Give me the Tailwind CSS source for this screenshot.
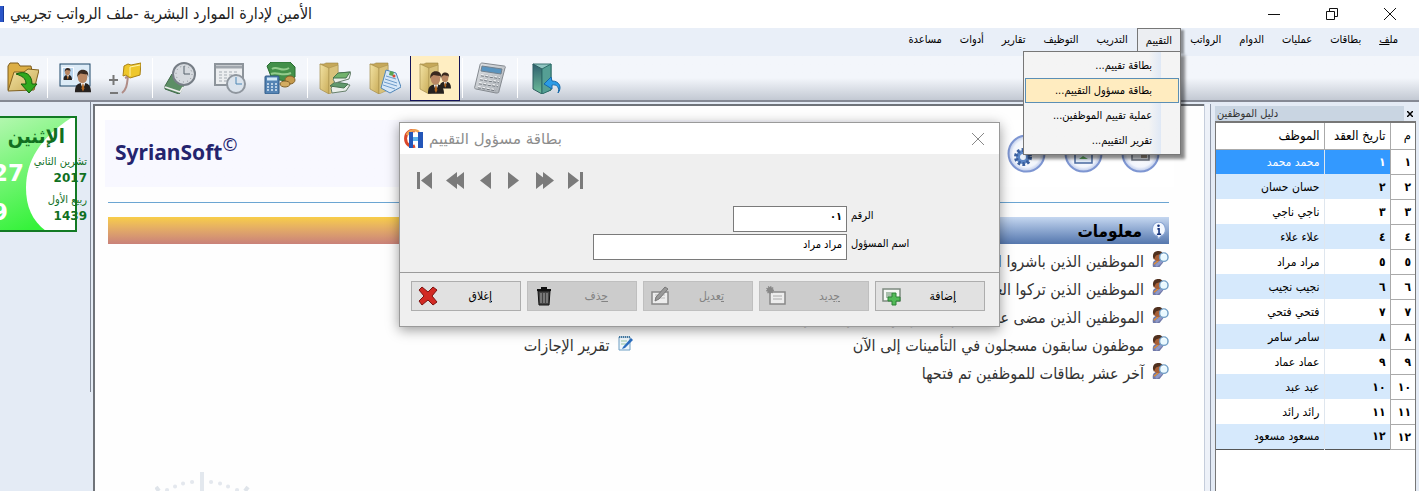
<!DOCTYPE html>
<html lang="ar">
  <head>
    <meta charset="UTF-8" />
    <meta name="viewport" content="width=device-width, initial-scale=1.0" />
    <title>الأمين لإدارة الموارد البشرية</title>
    <script src="https://cdn.jsdelivr.net/npm/@tailwindcss/browser@4"></script>
  </head>
  <body class="h-screen overflow-hidden flex flex-col bg-[#e4ebf5] font-['DejaVu_Sans_Condensed','DejaVu_Sans',sans-serif] text-black">
    <!-- shared icon shapes -->
    <svg class="absolute size-0">
      <defs>
        <linearGradient id="gold" x1="0" y1="0" x2="1" y2="1">
          <stop offset="0" stop-color="#f3e3a4" />
          <stop offset="1" stop-color="#c9ac58" />
        </linearGradient>
        <linearGradient id="silver" x1="0" y1="0" x2="1" y2="1">
          <stop offset="0" stop-color="#e2e5e8" />
          <stop offset="1" stop-color="#a9aeb4" />
        </linearGradient>
        <linearGradient id="teal" x1="0" y1="0" x2="0" y2="1">
          <stop offset="0" stop-color="#2f5f6e" />
          <stop offset="1" stop-color="#6fbf9b" />
        </linearGradient>
        <radialGradient id="orb">
          <stop offset="0" stop-color="#ffffff" />
          <stop offset="0.75" stop-color="#f2f5fc" />
          <stop offset="1" stop-color="#b9c8ea" />
        </radialGradient>
        <symbol id="folder" viewBox="0 0 32 32">
          <path d="M1 2h4l2-1h12v27l-3 1z" fill="#c5a85a" stroke="#9c8342" stroke-width=".6" />
          <path d="M1 2l9 4v26l-9-5z" fill="url(#gold)" stroke="#a58c4b" stroke-width=".7" />
          <path d="M10 6l9-3v25l-9 4z" fill="#d9c27b" stroke="#a58c4b" stroke-width=".5" />
        </symbol>
        <symbol id="person" viewBox="0 0 18 24">
          <path d="M1 24c0-7 2-9 6-10h5c4 1 6 4 6 10z" fill="#26211f" />
          <path d="M7 14l2.500 7L12 14z" fill="#f2f2f2" />
          <path d="M9 15l-1 5 1.500 3 1.500-3-1-5z" fill="#b3661f" />
          <ellipse cx="9" cy="8" rx="5" ry="6.500" fill="#b98763" />
          <path d="M3.500 8C3 2 6 0 9 0s7 1 6 8l-1-3c-3 0-5-1-7-1L4.500 6z" fill="#3a2a20" />
        </symbol>
        <symbol id="search-user" viewBox="0 0 18 18">
          <path d="M1 17c-1-5 1-7 4-8h4l3 3-4 5z" fill="#7079a8" />
          <path d="M5 15l6-5" stroke="#8f99c9" stroke-width="3" stroke-linecap="round" />
          <path d="M2 14l5-4" stroke="#e98f2c" stroke-width="1.200" />
          <circle cx="6" cy="6" r="4.500" fill="#a85f36" />
          <path d="M1 6C1 1 4 0 7 0s5 2 4 4C8 3 5 4 4 5L2 9z" fill="#50301e" />
          <circle cx="12.500" cy="6.500" r="4.500" fill="#eaf9ff" stroke="#6f9cc4" stroke-width="1.500" />
          <path d="M10 5c1-2 3-2 4-1" stroke="#fff" fill="none" />
        </symbol>
      </defs>
    </svg>

    <!-- title bar -->
    <header class="h-7 shrink-0 bg-white flex items-center justify-between">
      <div class="flex items-center gap-[6px]">
        <span class="w-1 h-4 bg-[#2a55c8] border-r border-[#173a9a]"></span>
        <h1 dir="rtl" class="text-[16px] leading-5 whitespace-nowrap text-[#222]">الأمين لإدارة الموارد البشرية -ملف الرواتب تجريبي</h1>
      </div>
      <div class="flex text-[#111]">
        <button class="w-[58px] h-7 flex items-center justify-center" aria-label="Minimize">
          <svg class="size-3" viewBox="0 0 12 12"><path d="M0 6.500h12" stroke="currentColor" /></svg>
        </button>
        <button class="w-[58px] h-7 flex items-center justify-center" aria-label="Restore">
          <svg class="size-3" viewBox="0 0 12 12" fill="none" stroke="currentColor"><path d="M.5 3.500h8v8h-8zM3.500 3.500v-3h8v8h-3" /></svg>
        </button>
        <button class="w-[58px] h-7 flex items-center justify-center" aria-label="Close">
          <svg class="size-3" viewBox="0 0 12 12"><path d="M0 0l12 12M12 0L0 12" stroke="currentColor" /></svg>
        </button>
      </div>
    </header>

    <!-- menu bar -->
    <nav dir="rtl" class="h-7 shrink-0 bg-[#e9eff8] px-3 text-[11px] leading-4 relative z-20">
      <ul class="flex">
        <li class="h-6 flex items-center px-[9px]"><a href="#">مل<u>ف</u></a></li>
        <li class="h-6 flex items-center px-[9px]"><a href="#">بطاقات</a></li>
        <li class="h-6 flex items-center px-[9px]"><a href="#">عمليات</a></li>
        <li class="h-6 flex items-center px-[9px]"><a href="#">الدوام</a></li>
        <li class="h-6 flex items-center px-[9px]"><a href="#">الرواتب</a></li>
        <li class="h-6 flex items-center px-2 relative border border-b-0 border-[#777] bg-[#eceef2] shadow-[3px_2px_2px_#0006]">
          <a href="#">التقييم</a>
          <ul class="absolute top-[22px] -right-px w-[158px] border border-[#777] bg-[#f4f4f4] bg-linear-to-l from-[#f4f4f4] from-12% via-[#dfe8f5] via-12% to-[#f4f4f4] to-20% p-px shadow-[4px_4px_3px_#0007]">
            <li class="h-[25px] flex items-center pr-[27px]"><a href="#">بطاقة تقييم...</a></li>
            <li class="h-[25px] flex items-center pr-[26px] border border-[#5b8fb5] bg-[#ffecc0]"><a href="#">بطاقة مسؤول التقييم...</a></li>
            <li class="h-[25px] flex items-center pr-[27px]"><a href="#">عملية تقييم الموظفين...</a></li>
            <li class="h-[25px] flex items-center pr-[27px]"><a href="#">تقرير التقييم...</a></li>
          </ul>
        </li>
        <li class="h-6 flex items-center px-[9px]"><a href="#">التدريب</a></li>
        <li class="h-6 flex items-center px-[9px]"><a href="#">التوظيف</a></li>
        <li class="h-6 flex items-center px-[9px]"><a href="#">تقارير</a></li>
        <li class="h-6 flex items-center px-[9px]"><a href="#">أدوات</a></li>
        <li class="h-6 flex items-center px-[9px]"><a href="#">مساعدة</a></li>
      </ul>
    </nav>

    <!-- toolbar -->
    <div class="h-[46px] shrink-0 flex items-center bg-linear-to-b from-[#f3f6fb] from-50% to-[#c3c9d3] border-b-2 border-[#858994]">
      <button class="w-[45px] h-11 flex items-center justify-center" aria-label="فتح ملف">
        <svg class="size-8" viewBox="0 0 32 32">
          <path d="M1 28V4l2-3h8l2 3h11l1 5v17z" fill="#dcae45" stroke="#7d5c1d" />
          <path d="M1 29l6-19h10l4-3 11 1-5 20z" fill="url(#gold)" stroke="#80601f" />
          <path d="M9 12c10-4 16 1 16 10h5l-8 9-8-9h5c0-6-4-8-10-10z" fill="#30a91e" stroke="#17600f" />
        </svg>
      </button>
      <span class="w-px h-10 mx-0.5 bg-[#fff]"></span>
      <button class="w-[50px] h-11 flex items-center justify-center" aria-label="بطاقة موظف">
        <svg class="size-8" viewBox="0 0 32 32">
          <rect x="1" y="2" width="30" height="22" fill="#dcebf7" stroke="#1d4668" />
          <rect x="3.500" y="5.500" width="11" height="12" fill="#b8d4ec" stroke="#f8fbff" />
          <use href="#person" x="4" y="6" width="9" height="12" />
          <use href="#person" x="15" y="7" width="17" height="24" />
        </svg>
      </button>
      <button class="w-[50px] h-11 flex items-center justify-center" aria-label="إضافة وحسم">
        <svg class="size-8" viewBox="0 0 32 32" fill="none">
          <path d="M0 18h9M4.500 13v10M1 31h8" stroke="#777" stroke-width="2" />
          <path d="M13 31c5-4 5-9 6-17M16 16l6-3" stroke="#b08c86" stroke-width="2" />
          <path d="M15 4l4-2 3 1 10-2-1 12-10 3-4-3-3 1z" fill="#eec72b" stroke="#a98216" />
          <path d="M21 5l10-2M21 5v9" stroke="#fff3ad" />
        </svg>
      </button>
      <span class="w-px h-10 mx-0.5 bg-[#fff]"></span>
      <button class="w-[50px] h-11 flex items-center justify-center" aria-label="الدوام">
        <svg class="size-8" viewBox="0 0 32 32">
          <path d="M8 12l13 8-4 9-2 3L1 27v-3z" fill="#5c8e65" stroke="#3e6847" />
          <path d="M1 25l15 5 3-5" fill="none" stroke="#eee" stroke-width="1.500" />
          <circle cx="20" cy="12" r="11" fill="#d6dadf" stroke="#777e86" stroke-width="2" />
          <circle cx="20" cy="12" r="8" fill="none" stroke="#8a9097" stroke-dasharray="1 3.200" />
          <path d="M20 4v8h6" fill="none" stroke="#55606b" />
        </svg>
      </button>
      <button class="w-[50px] h-11 flex items-center justify-center" aria-label="جدول الدوام">
        <svg class="size-8" viewBox="0 0 32 32">
          <rect x="1" y="2" width="28" height="21" fill="#eceef0" stroke="#8d949b" stroke-width="2" />
          <path d="M2 5h26" stroke="#a0a6ad" stroke-width="3" />
          <path d="M5 10h20M5 13h20M5 16h20M5 19h20" stroke="#a4abb2" stroke-dasharray="3 2" />
          <circle cx="22" cy="22" r="9" fill="#dbe3ec" stroke="#8f969e" stroke-width="2" />
          <path d="M22 15v7h6" fill="none" stroke="#4c87b5" />
        </svg>
      </button>
      <button class="w-[50px] h-11 flex items-center justify-center" aria-label="الرواتب">
        <svg class="size-8" viewBox="0 0 32 32">
          <path d="M3 4l4-4h19l5 5v10l-8 4L8 17z" fill="#43904a" stroke="#286c31" />
          <path d="M8 7c5-4 10 4 17-1M7 12c6-3 11 3 20-1" fill="none" stroke="#93cc8d" stroke-width="2" />
          <ellipse cx="26" cy="18" rx="5" ry="4" fill="#c59a4c" stroke="#82622a" />
          <ellipse cx="21" cy="22" rx="5" ry="3" fill="#d3ac62" stroke="#82622a" />
          <rect x="1" y="14" width="14" height="18" rx="1" fill="#5584b4" stroke="#2f5884" />
          <path d="M3 17h10" stroke="#d1e8f8" stroke-width="3" />
          <path d="M3 22h10M3 25h10M3 28h10" stroke="#ddeaf6" stroke-width="1.500" stroke-dasharray="2 2" />
        </svg>
      </button>
      <span class="w-px h-10 mx-0.5 bg-[#fff]"></span>
      <button class="w-[50px] h-11 flex items-center justify-center" aria-label="التدريب">
        <svg class="size-8" viewBox="0 0 32 32">
          <use href="#folder" width="32" height="32" />
          <path d="M12 26l5-5 14 2-4 6-14 2z" fill="#e9eee9" stroke="#67806c" />
          <path d="M11 24l5-4 13 2-4 4z" fill="#619a6d" stroke="#47744f" />
          <path d="M14 17l6-6 12-1-2 7-14 4z" fill="#e9eee9" stroke="#67806c" />
          <path d="M14 16l5-5 12-1-4 6z" fill="#72b36c" stroke="#47744f" />
        </svg>
      </button>
      <button class="w-[50px] h-11 flex items-center justify-center" aria-label="التوظيف">
        <svg class="size-8" viewBox="0 0 32 32">
          <use href="#folder" width="32" height="32" />
          <path d="M17 8l10 3 5 14-11 6-9-5z" fill="#d6e7f7" stroke="#4f86b8" />
          <path d="M17 14l10 3M16 17l12 4M15 20l13 4M14 23l12 4" stroke="#6d9ccb" />
          <path d="M21 9l4 1-1 4-4-1z" fill="#5aa352" /><circle cx="25" cy="14" r="1.500" fill="#d94e36" />
        </svg>
      </button>
      <button class="w-[50px] h-[46px] flex items-center justify-center border border-[#14145a] bg-[#ffeec2]" aria-label="بطاقة مسؤول التقييم">
        <svg class="size-8" viewBox="0 0 32 32">
          <use href="#folder" width="32" height="32" />
          <use href="#person" x="20" y="10" width="12" height="17" />
          <use href="#person" x="8" y="9" width="17" height="23" />
        </svg>
      </button>
      <span class="w-px h-10 mx-0.5 bg-[#fff]"></span>
      <button class="w-[50px] h-11 flex items-center justify-center" aria-label="حاسبة">
        <svg class="size-8" viewBox="0 0 32 32">
          <path d="M8 1l22 3c1 0 2 1 1 2l-6 23c0 2-1 2-3 2L2 27c-1 0-2-1-1-3L6 3c0-1 1-2 2-2z" fill="url(#silver)" stroke="#858a90" />
          <path d="M8 4l20 3-1 5-20-3z" fill="#5994c0" stroke="#71818f" />
          <path d="M7 13l19 3M6 17l19 3M5 21l19 3M4 25l18 3" stroke="#6f757c" stroke-width="2.500" stroke-dasharray="3 1.500" />
          <path d="M7 12.500l19 3M6 16.500l19 3M5 20.500l19 3M4 24.500l18 3" stroke="#eceef0" stroke-width="1.500" stroke-dasharray="3 1.500" />
        </svg>
      </button>
      <span class="w-px h-10 mx-0.5 bg-[#fff]"></span>
      <button class="w-[50px] h-11 flex items-center justify-center" aria-label="خروج">
        <svg class="size-8" viewBox="0 0 32 32">
          <path d="M4 2h18v26l-9 3z" fill="#8fc4c0" stroke="#3a7271" />
          <path d="M4 2l9 5v25l-9-5z" fill="url(#teal)" stroke="#2d5d60" />
          <path d="M13 7l9-5v26l-9 4z" fill="#559f94" stroke="#2d6c68" />
          <path d="M29 31c2-5-1-9-6-8v4l-8-5 7-7 1 4c8 0 10 7 6 12z" fill="#2b9be6" stroke="#1668a8" />
        </svg>
      </button>
    </div>

    <div class="flex-1 min-h-0 flex relative">
      <!-- date card -->
      <aside class="w-[91px] shrink-0 border-r border-[#7f8794] pt-[14px] h-[290px]">
        <div class="relative">
          <svg class="w-[77px] h-[116px]" viewBox="0 0 77 116">
            <defs>
              <linearGradient id="leaf" x1="0" y1="0" x2="0.300" y2="1">
                <stop offset="0" stop-color="#b4f7b0" />
                <stop offset="1" stop-color="#35f23a" />
              </linearGradient>
            </defs>
            <path d="M0 0h77v116H0z" fill="url(#leaf)" />
            <path d="M71 2C40 22 26 45 26 72c0 18 6 33 20 43h30V2z" fill="#fff" />
            <path d="M0 1h76v114H0" fill="none" stroke="#127a24" stroke-width="2" />
          </svg>
          <div class="absolute top-[38px] -left-2 flex flex-col text-white font-['DejaVu_Sans'] font-bold text-[23px] leading-[39px]">
            <span>27</span>
            <span>9</span>
          </div>
          <div dir="rtl" class="absolute top-1 right-[3px] flex flex-col text-[#11701f] text-[11px] leading-4 whitespace-nowrap">
            <span class="text-[20px] leading-8 font-bold pr-[22px]">الإثنين</span>
            <span class="mt-[2px]">تشرين الثاني</span>
            <span class="font-['DejaVu_Sans'] font-bold text-[12px]">2017</span>
            <span class="mt-[6px]">ربيع الأول</span>
            <span class="font-['DejaVu_Sans'] font-bold text-[12px]">1439</span>
          </div>
        </div>
      </aside>

      <!-- start page -->
      <main class="flex-1 min-w-0 mt-[2px] ml-[2px] relative bg-[#fefefe] border-t-2 border-l-2 border-[#6f7379] pt-[14px] pl-[10px] pr-[30px]">
        <div class="h-[67px] flex items-center justify-between bg-linear-to-r from-[#f8f8ff] from-50% to-white to-85% pl-[10px] pr-[14px]">
          <div class="font-['Noto_Sans'] font-bold text-[21px] leading-8 pb-1 text-[#24246e]">SyrianSoft<sup class="text-[18px] leading-none font-normal">©</sup></div>
          <div class="flex gap-[18px]">
            <svg class="size-[39px]" viewBox="0 0 39 39">
              <circle cx="19.500" cy="19.500" r="18" fill="url(#orb)" stroke="#7e96d2" stroke-width="2" />
              <circle cx="16" cy="23" r="7" fill="#5b86c6" stroke="#3a5f9e" stroke-width="4" stroke-dasharray="2.500 2" />
              <circle cx="16" cy="23" r="3" fill="#e9f1fb" />
            </svg>
            <svg class="size-[39px]" viewBox="0 0 39 39">
              <circle cx="19.500" cy="19.500" r="18" fill="url(#orb)" stroke="#7e96d2" stroke-width="2" />
              <rect x="11" y="13" width="17" height="16" fill="#e4eefb" stroke="#49699f" stroke-width="1.500" />
              <path d="M15 25l4-3 5 3" fill="#5aa05a" />
            </svg>
            <svg class="size-[39px]" viewBox="0 0 39 39">
              <circle cx="19.500" cy="19.500" r="18" fill="url(#orb)" stroke="#7e96d2" stroke-width="2" />
              <rect x="11" y="13" width="17" height="13" fill="#d9dde3" stroke="#6c7380" stroke-width="1.500" />
              <path d="M20 19h6v5h-6z" fill="#8d8377" />
            </svg>
          </div>
        </div>
        <div class="ml-[3px] mr-[5px]">
          <hr class="mt-[15px] border-[#6ba5d2]" />
          <div dir="rtl" class="mt-[14px] grid grid-cols-2 text-[16px] leading-7 whitespace-nowrap text-[#333]">
            <section>
              <h2 class="h-[27px] flex items-center gap-2 bg-linear-to-b from-[#c5d7f0] to-[#5577ae] pr-[2px] text-[17px] font-bold text-black">
                <svg class="size-[17px]" viewBox="0 0 16 16"><path d="M8 0a7 7 0 0 1 2 13.500L8 16l-1-2.500A7 7 0 0 1 8 0z" fill="#f3f8ff" stroke="#8aa6d4" /><path d="M7 6.500h1.500V11M6.500 11.500h4" stroke="#16337c" stroke-width="1.500" fill="none" /><circle cx="8" cy="3.500" r="1.200" fill="#16337c" /></svg>
                معلومات
              </h2>
              <ul class="pt-1">
                <li class="flex gap-2"><svg class="w-[17px] h-[17px] mt-[3px]"><use href="#search-user" /></svg><a href="#">الموظفين الذين باشروا العمل</a></li>
                <li class="flex gap-2"><svg class="w-[17px] h-[17px] mt-[3px]"><use href="#search-user" /></svg><a href="#">الموظفين الذين تركوا العمل</a></li>
                <li class="flex gap-2"><svg class="w-[17px] h-[17px] mt-[3px]"><use href="#search-user" /></svg><a href="#">الموظفين الذين مضى على تعيينهم أكثر من سنة ولم يثبتوا</a></li>
                <li class="flex gap-2"><svg class="w-[17px] h-[17px] mt-[3px]"><use href="#search-user" /></svg><a href="#">موظفون سابقون مسجلون في التأمينات إلى الآن</a></li>
                <li class="flex gap-2"><svg class="w-[17px] h-[17px] mt-[3px]"><use href="#search-user" /></svg><a href="#">آخر عشر بطاقات للموظفين تم فتحها</a></li>
              </ul>
            </section>
            <section>
              <h2 class="h-[27px] bg-linear-to-b from-[#f8cd47] to-[#c98179]"></h2>
              <ul class="pt-[88px] pr-[5px]">
                <li class="flex gap-2">
                  <svg class="w-4 h-[17px] mt-[3px]" viewBox="0 0 16 17"><path d="M1 2h11v13H1z" fill="#eef6fb" stroke="#6f9fc4" /><path d="M1 2h11" stroke="#467ca6" stroke-width="2" stroke-dasharray="1 1" /><path d="M3 6h6M3 9h5" stroke="#9cc9a4" /><path d="M5 12l8-9 2 2-8 8-3 1z" fill="#2c6fc0" /></svg>
                  <a href="#">تقرير الإجازات</a>
                </li>
              </ul>
            </section>
          </div>
        </div>
        <svg class="absolute left-[60px] bottom-0 w-[96px] h-5" viewBox="0 0 96 20">
          <path d="M47 1v19" stroke="#e3e8ee" stroke-width="4" />
          <path d="M1 16l3 4M93 16l-3 4" stroke="#dfe4ea" stroke-width="4" />
          <path d="M12 19h.1M20 15.500h.1M28 12.500h.1M37 11h.1M56 11h.1M65 12.500h.1M73 15.500h.1M82 19h.1" stroke="#e4e8ee" stroke-width="4" stroke-linecap="round" />
        </svg>
      </main>

      <!-- employee index -->
      <aside dir="rtl" class="w-[215px] shrink-0 mt-[2px] pr-[3px] flex">
        <div class="flex-1 flex flex-col pt-[2px]">
          <div class="h-[15px] flex items-center justify-between bg-[#c9d5e2] pl-[2px] text-[11px] leading-3 text-[#333]">
            <button class="w-3 h-full flex items-center justify-center bg-[#e4ebf5]" aria-label="إغلاق الدليل">
              <svg class="size-[6px]" viewBox="0 0 6 6"><path d="M0 0l6 6M6 0L0 6" stroke="#000" stroke-width="1.500" /></svg>
            </button>
            <span>دليل الموظفين</span>
          </div>
          <div class="flex-1 bg-white border-t-2 border-l border-r border-[#777]">
            <table class="w-full table-fixed border-b border-[#555] text-right text-[12px] leading-4">
              <thead>
                <tr class="h-[26px] text-[13px]">
                  <th class="w-[25px] border-l border-b border-[#aaa] font-normal pr-1">م</th>
                  <th class="w-[66px] border-l border-b border-[#aaa] font-normal pr-1 whitespace-nowrap">تاريخ العقد</th>
                  <th class="border-b border-[#aaa] font-normal pr-1">الموظف</th>
                </tr>
              </thead>
              <tbody id="employees"></tbody>
            </table>
          </div>
        </div>
        <div class="w-[5px] border-l border-[#8d96a6]"></div>
        <div class="w-[6px] border-l border-[#c5cddb] bg-[#edf1f8]"></div>
      </aside>

      <!-- evaluator card -->
      <div class="absolute left-[399px] top-5 w-[601px] border border-[#9a9a9a] bg-[#efefef] shadow-[0_3px_12px_#0006] z-10">
        <div class="h-[31px] bg-white flex items-center justify-between pl-1 pr-[15px]">
          <div class="flex items-center gap-[5px]">
            <svg class="size-5" viewBox="0 0 20 20">
              <path d="M11 2a7 8 0 1 0 0 15" fill="none" stroke="#d9472b" stroke-width="3" />
              <path d="M3 6c2-5 8-6 12-3" fill="none" stroke="#efa356" stroke-width="2.500" />
              <path d="M5 3h4v6h5V3h5v16h-5v-7H9v7H5z" fill="#2456b8" />
              <path d="M9 8h5v4H9z" fill="#60b4ea" />
            </svg>
            <h3 dir="rtl" class="font-['DejaVu_Sans'] text-[15px] leading-5 text-[#8d8d8d]">بطاقة مسؤول التقييم</h3>
          </div>
          <button aria-label="Close" class="text-[#888]"><svg class="size-3" viewBox="0 0 12 12"><path d="M0 0l12 12M12 0L0 12" stroke="currentColor" /></svg></button>
        </div>
        <div class="flex gap-3 pl-4 pt-[18px] text-[#7b7b7b]">
          <button aria-label="الأول"><svg class="w-[18px] h-[17px]" viewBox="0 0 18 17" fill="currentColor"><path d="M1 0h3v17H1zM16 0v17L5 8.500z" /></svg></button>
          <button aria-label="رجوع سريع"><svg class="w-[18px] h-[17px]" viewBox="0 0 18 17" fill="currentColor"><path d="M11 0v17L0 8.500zM18 0v17L7 8.500z" /></svg></button>
          <button aria-label="السابق"><svg class="w-[18px] h-[17px]" viewBox="0 0 18 17" fill="currentColor"><path d="M15 0v17L4 8.500z" /></svg></button>
          <button aria-label="التالي"><svg class="w-[18px] h-[17px]" viewBox="0 0 18 17" fill="currentColor"><path d="M2 0v17l11-8.500z" /></svg></button>
          <button aria-label="تقدم سريع"><svg class="w-[18px] h-[17px]" viewBox="0 0 18 17" fill="currentColor"><path d="M0 0v17l11-8.500zM7 0v17l11-8.500z" /></svg></button>
          <button aria-label="الأخير"><svg class="w-[18px] h-[17px]" viewBox="0 0 18 17" fill="currentColor"><path d="M2 0v17l11-8.500zM14 0h3v17h-3z" /></svg></button>
        </div>
        <div dir="rtl" class="grid grid-cols-[152px_1fr] gap-y-[2px] pt-[17px] text-[11px] leading-4">
          <label for="number" class="flex justify-end pl-1 h-[26px] pt-[2px] whitespace-nowrap">الرقم</label>
          <input id="number" value="٠١" class="w-[114px] h-[26px] bg-white border border-[#7a7a7a] px-1 pb-[6px] font-bold" />
          <label for="evaluator" class="flex justify-end pl-1 h-[26px] pt-[2px] whitespace-nowrap">اسم المسؤول</label>
          <input id="evaluator" value="مراد مراد" class="w-[254px] h-[26px] bg-white border border-[#7a7a7a] px-1 pb-[6px]" />
        </div>
        <div dir="rtl" class="mt-3 border-t border-[#9b9b9b] flex gap-[6px] pt-2 pb-[15px] pr-[14px] text-[12px] leading-4">
          <button class="w-[110px] h-[30px] flex items-center justify-between border border-[#adadad] bg-[#e1e1e1] pr-7 pl-[6px]">
            <span><u>إ</u>ضافة</span>
            <svg class="size-5" viewBox="0 0 20 20"><path d="M1 3h17v12H1z" fill="#f5f8f5" stroke="#7e8a80" stroke-width="1.500" /><path d="M4 6h6v6H4z" fill="#a9c0ad" /><path d="M10 7h4v4h4v4h-4v4h-4v-4H6v-4h4z" fill="#52ba58" stroke="#2c8236" /></svg>
          </button>
          <button disabled class="w-[110px] h-[30px] flex items-center justify-between border border-[#bfbfbf] bg-[#ccc] text-[#838383] pr-7 pl-[6px]">
            <span><u>ج</u>ديد</span>
            <svg class="size-5" viewBox="0 0 20 20"><path d="M4 6h15v12H4z" fill="#ededed" stroke="#888" stroke-width="1.500" /><path d="M7 10h9M7 13h9" stroke="#aaa" /><circle cx="4" cy="4" r="3" fill="#888" stroke="#888" stroke-width="2" stroke-dasharray="1 1" /></svg>
          </button>
          <button disabled class="w-[110px] h-[30px] flex items-center justify-between border border-[#bfbfbf] bg-[#ccc] text-[#838383] pr-7 pl-[6px]">
            <span><u>ت</u>عديل</span>
            <svg class="size-5" viewBox="0 0 20 20"><path d="M2 6h16v12H2z" fill="#ededed" stroke="#888" stroke-width="1.500" /><path d="M5 9h10M5 12h10" stroke="#bbb" /><path d="M5 15l1-4 9-10 3 2-9 10z" fill="#999" stroke="#777" /></svg>
          </button>
          <button disabled class="w-[110px] h-[30px] flex items-center justify-between border border-[#bfbfbf] bg-[#ccc] text-[#838383] pr-7 pl-[6px]">
            <span><u>ح</u>ذف</span>
            <svg class="size-5" viewBox="0 0 20 20"><path d="M4 5h12l-1 14H5z" fill="#444" stroke="#111" /><path d="M7 7v10M10 7v10M13 7v10" stroke="#aaa" /><path d="M3 4h14M7 2h6" stroke="#111" stroke-width="2" /></svg>
          </button>
          <button class="w-[110px] h-[30px] flex items-center justify-between border border-[#adadad] bg-[#e1e1e1] pr-7 pl-[6px]">
            <span><u>إ</u>غلاق</span>
            <svg class="size-5" viewBox="0 0 20 20"><path d="M4 1l6 5 5-5 4 3-5 6 5 6-4 3-5-5-6 5-3-4 5-5-5-6z" fill="#d22a24" stroke="#7c1210" /></svg>
          </button>
        </div>
      </div>
    </div>

    <script>
      const employees = [
        ["١", "محمد محمد"],
        ["٢", "حسان حسان"],
        ["٣", "ناجي ناجي"],
        ["٤", "علاء علاء"],
        ["٥", "مراد مراد"],
        ["٦", "نجيب نجيب"],
        ["٧", "فتحي فتحي"],
        ["٨", "سامر سامر"],
        ["٩", "عماد عماد"],
        ["١٠", "عبد عبد"],
        ["١١", "رائد رائد"],
        ["١٢", "مسعود مسعود"],
      ];

      const tbody = document.getElementById("employees");
      for (let i = 0; i < employees.length; i++) {
        let color = i % 2 ? "bg-[#d6e9fc]" : "bg-white";
        if (i === 0) color = "bg-[#3399ff] text-white";
        const tr = document.createElement("tr");
        tr.className = "h-[25px]";
        tr.innerHTML = `
          <td class="border-l border-b border-[#aaa] pr-1 font-bold">${employees[i][0]}</td>
          <td class="border-l border-[#dfe6ee] pr-1 font-bold ${color}">${employees[i][0]}</td>
          <td class="pr-1 ${color}">${employees[i][1]}</td>`;
        tbody.appendChild(tr);
      }
    </script>
  </body>
</html>
